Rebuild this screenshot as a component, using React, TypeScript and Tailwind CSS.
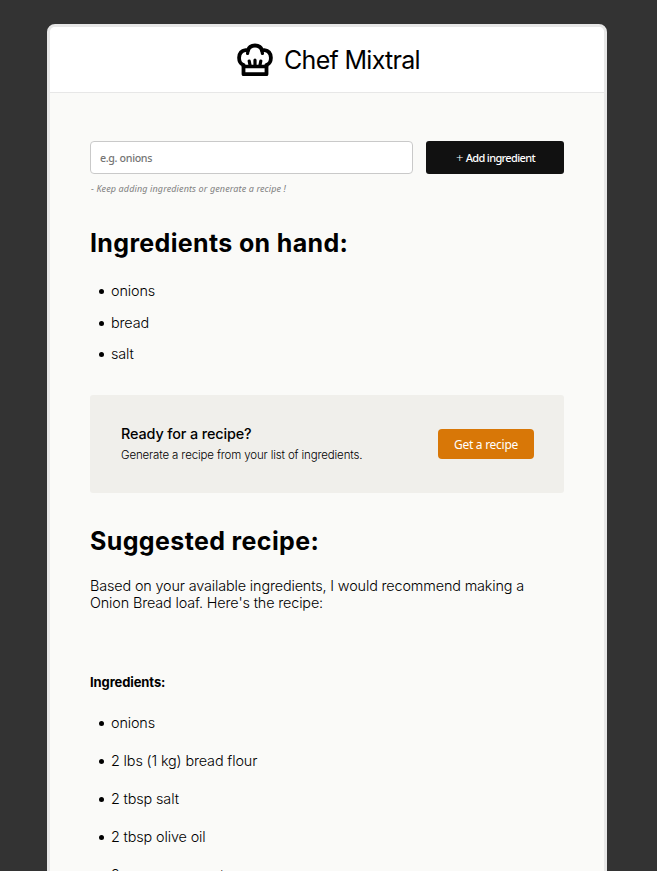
import React from "react";

const pantry = ["onions", "bread", "salt"];
const recipeItems = [
  "onions",
  "2 lbs (1 kg) bread flour",
  "2 tbsp salt",
  "2 tbsp olive oil",
  "2 cups warm water",
];

function ChefHat() {
  return (
    <svg className="h-[34px] w-[38px] shrink-0" viewBox="0 0 38 34" fill="none" stroke="#000" strokeLinecap="round" strokeLinejoin="round">
      <path strokeWidth="3.8" d="M7.500 23V31.200H30.500V23" />
      <path strokeWidth="3.400" d="M7.500 23.500H30.500" />
      <path strokeWidth="3.800" d="M7.500 22C1.500 20 1.200 8.500 9.500 7.200C10.500 7 11.300 7.200 12 7.500C13.500 .8 24.500 .8 26 7.500C26.700 7.200 27.500 7 28.500 7.200C36.800 8.500 36.500 20 30.500 22" />
      <path strokeWidth="3.200" d="M12 7.500L11.600 10.500M26 7.500L26.400 10.500M13.200 18L14 22M19 17.200V22M24.800 18L24 22" />
    </svg>
  );
}

function BulletItem({ text, className }: { text: string; className: string }) {
  return (
    <li className={`flex items-center pl-[9px] ${className}`}>
      <span className="mr-[7px] mt-px size-[5px] shrink-0 rounded-full bg-black" />
      <span className="whitespace-nowrap">{text}</span>
    </li>
  );
}

export default function App() {
  return (
    <div className="flex h-[871px] w-[657px] overflow-hidden bg-[#333333] pl-[47px] pt-6 font-['Inter',sans-serif] text-black">
      <main className="h-[900px] w-[560px] shrink-0 overflow-hidden rounded-t-[8px] border-[3px] border-[#e7e7e7] bg-[#fafaf8]">
        <header className="flex h-[66px] items-center border-b border-[#e7e7e7] bg-white pl-[186px]">
          <ChefHat />
          <h1 className="ml-[10px] whitespace-nowrap pt-px text-[25px] leading-8 tracking-[-0.7px]">Chef Mixtral</h1>
        </header>
        <div className="pl-10 pr-10 pt-12">
          <form className="flex gap-[13px]" onSubmit={(e) => e.preventDefault()}>
            <input
              className="h-[33px] w-[323px] rounded-[4px] border border-[#c9c9c9] bg-white px-[9px] font-['Noto_Sans',sans-serif] text-[10.700px] font-medium tracking-[-0.35px] placeholder:text-[#757575]"
              placeholder="e.g. onions"
            />
            <button className="flex h-[33px] w-[138px] items-center justify-center gap-[3px] rounded-[3px] bg-[#111111] pl-px pt-px font-['Noto_Sans',sans-serif] text-[11px] font-medium tracking-[-0.65px] text-white">
              <span className="text-[13px] font-light leading-none">+</span>
              <span>Add ingredient</span>
            </button>
          </form>
          <p className="ml-px mt-[9px] h-3 font-['Noto_Sans',sans-serif] text-[9px] italic leading-3 tracking-[0.12px] text-[#808080]">
            - Keep adding ingredients or generate a recipe !
          </p>
          <h2 className="mb-4 mt-8 whitespace-nowrap text-[25px] font-bold leading-8 tracking-[0.35px]">Ingredients on hand:</h2>
          <ul className="text-[14.4px] font-light tracking-[-0.12px]">
            {pantry.map((item, index) => (
              <BulletItem key={item} text={item} className={index === 0 ? "h-8" : index === 1 ? "h-[31.500px]" : "h-[31px]"} />
            ))}
          </ul>
          <section className="mt-[25px] flex h-[98px] w-[474px] items-center justify-between rounded-[3px] bg-[#f0efeb] pl-[31px] pr-[30px]">
            <div>
              <h3 className="text-[14.4px] font-medium leading-[22px] tracking-[-0.12px]">Ready for a recipe?</h3>
              <p className="text-[11.500px] font-light leading-5 tracking-[-0.14px]">Generate a recipe from your list of ingredients.</p>
            </div>
            <button className="h-[30px] w-24 rounded-[4px] bg-[#d87707] pt-0.5 font-['Noto_Sans',sans-serif] text-[12px] tracking-[-0.27px] text-white">
              Get a recipe
            </button>
          </section>
          <h2 className="mb-5 mt-8 whitespace-nowrap text-[25px] font-bold leading-8 tracking-[0.37px]">Suggested recipe:</h2>
          <p className="whitespace-nowrap text-[14.4px] font-light leading-[17px] tracking-[-0.14px]">
            Based on your available ingredients, I would recommend making a<br />
            Onion Bread loaf. Here's the recipe:
          </p>
          <h3 className="mt-[61px] text-[13px] font-bold leading-5 tracking-[-0.1px]">Ingredients:</h3>
          <ul className="mt-3 text-[14.4px] font-light tracking-[-0.13px]">
            {recipeItems.map((item) => (
              <BulletItem key={item} text={item} className="h-[38px]" />
            ))}
          </ul>
        </div>
      </main>
    </div>
  );
}
